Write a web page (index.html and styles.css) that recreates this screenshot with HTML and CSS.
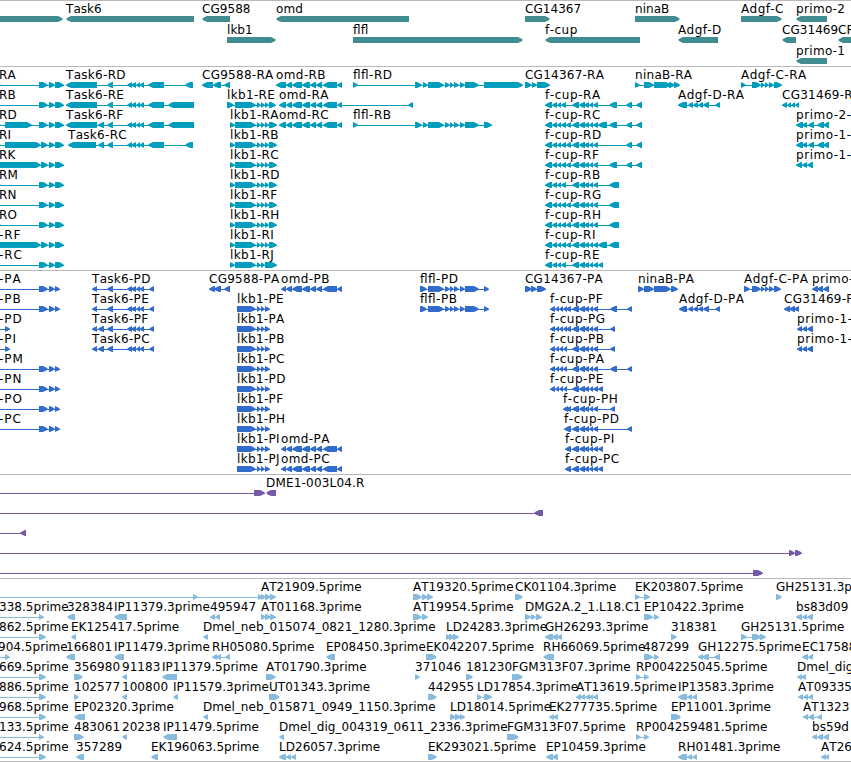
FILE: index.html
```
<!DOCTYPE html>
<html lang="en">
<head>
    <meta charset="UTF-8">
    <meta name="viewport" content="width=device-width, initial-scale=1.0">
    <title>Genome Browser</title>
    <link rel="stylesheet" href="styles.css">
</head>
<body>
    <main class="browser">
        <section class="track genes" id="genes"></section>
        <section class="track transcripts" id="transcripts"></section>
        <section class="track proteins" id="proteins"></section>
        <section class="track clones" id="clones"></section>
        <section class="track ests" id="ests"></section>
    </main>
    <script src="tracks.js"></script>
</body>
</html>
```

FILE: styles.css
```
body {
    margin: 0;
    background: white;
    overflow: hidden;
}
.browser {
    display: flex;
    flex-direction: column;
    width: 851px;
    height: 762px;
    overflow: hidden;
}
.track {
    flex: none;
    box-sizing: border-box;
    border-top: 1px solid #b9b9b9;
}
.track svg {
    display: block;
    width: 100%;
    height: 100%;
}
.track text {
    font-family: "DejaVu Sans", sans-serif;
    font-size: 12px;
    font-kerning: none;
    fill: black;
}
.genes {
    height: 66px;
    color: #408c91;
}
.transcripts {
    height: 204px;
    color: #009dbd;
}
.proteins {
    height: 204px;
    color: #316bcb;
}
.clones {
    height: 104px;
    color: #7558a8;
}
.ests {
    height: 184px;
    color: #87bbde;
    border-bottom: 1px solid #b9b9b9;
}
.exon {
    fill: currentColor;
}
.intron {
    fill: currentColor;
    shape-rendering: crispEdges;
}
```

FILE: tracks.js
```
const SVG = 'http://www.w3.org/2000/svg';

// Exon sets shared by several features: start, end, start, end...
const tail = [49, 55, 55, 64];
const ptail = [-9, -4, 39, 48, 49, 55, 55, 60];
const task = [127, 132, 131, 136, 136, 140, 139.5, 144];
const lkb = [230, 235, 235, 256, 257, 261, 261, 265, 265, 269, 269, 277];
const plkb = [237, 256, 257, 261, 261, 265, 265, 270];
const omd = [286, 292, 292, 302, 302, 310, 310, 316, 316, 322, 323, 337, 337, 342];
const flfl = [428, 444, 445, 450, 450, 454, 454, 459, 460, 465, 465, 479];
const cup = [545, 552, 552, 557, 557, 561, 561, 566];
const pcup = [550, 555, 555, 559, 559, 563, 563, 567];
const mid = [572, 579, 579, 585, 584, 589, 589, 593, 593, 598];
const adgfD = [688, 693, 693, 698, 698, 703, 703, 709, 715, 720];
const adgfC = [752, 761, 761, 765, 765, 769, 769, 774];

// Feature: [row, label, label x, strand, exons]
const genes = [
    [0, '', 0, '>', [-20, 63]],
    [0, 'Task6', 66, '<', [66, 194]],
    [0, 'CG9588', 202, '<', [202, 230]],
    [0, 'omd', 276, '<', [276, 409]],
    [0, 'CG14367', 525, '>', [525, 550]],
    [0, 'ninaB', 635, '>', [635, 680]],
    [0, 'Adgf-C', 741, '>', [741, 782]],
    [0, 'primo-2', 796, '<', [796, 827]],
    [1, 'lkb1', 227, '>', [227, 276]],
    [1, 'flfl', 353, '>', [353, 523]],
    [1, 'f-cup', 545, '<', [545, 640]],
    [1, 'Adgf-D', 678, '<', [678, 718]],
    [1, 'CG31469', 782, '<', [782, 796]],
    [1, 'CR', 838, '<', [838, 870]],
    [2, 'primo-1', 796, '<', [796, 827]]
];

const transcripts = [
    [0, 'RA', -1, '>', [-5, 1, 39, 48, ...tail]],
    [1, 'RB', -1, '>', [-5, -1, 39, 48, ...tail]],
    [2, 'RD', -1, '>', [-5, 1, 5, 32, 39, 48, ...tail]],
    [3, 'RI', -1, '>', [-5, 1, 5, 41, 41, 48, ...tail]],
    [4, 'RK', -1, '>', [-20, 41, 41, 48, ...tail]],
    [5, 'RM', -1, '>', [-5, 1, 39, 48, ...tail]],
    [6, 'RN', -1, '>', [-5, -1, 39, 48, ...tail]],
    [7, 'RO', -1, '>', [-5, 1, 39, 48, ...tail]],
    [8, '-RF', -1, '>', [-20, 41, 41, 48, ...tail]],
    [9, '-RC', -1, '>', [-5, -1, 39, 48, ...tail]],
    [0, 'Task6-RD', 66, '<', [66, 97, 107, 113, ...task, 148, 164, 185, 193]],
    [1, 'Task6-RE', 66, '<', [66, 97, 107, 113, ...task, 148, 164, 168, 194]],
    [2, 'Task6-RF', 66, '<', [66, 97, 98, 104, 107, 113, ...task, 148, 164, 168, 194]],
    [3, 'Task6-RC', 68, '<', [68, 96, 98, 104, 107, 113, ...task, 148, 164, 185, 193]],
    [0, 'CG9588-RA', 202, '<', [202, 213, 213, 221, 224, 230]],
    [1, 'lkb1-RE', 227, '>', [227, 234, 235, 256, 257, 261, 261, 265, 265, 269, 269, 276]],
    [2, 'lkb1-RA', 230, '>', lkb],
    [3, 'lkb1-RB', 230, '>', lkb],
    [4, 'lkb1-RC', 230, '>', lkb],
    [5, 'lkb1-RD', 230, '>', lkb],
    [6, 'lkb1-RF', 230, '>', lkb],
    [7, 'lkb1-RH', 230, '>', lkb],
    [8, 'lkb1-RI', 230, '>', lkb],
    [9, 'lkb1-RJ', 230, '>', [230, 235, 235, 256, 257, 261, 261, 265, 265, 277]],
    [0, 'omd-RB', 276, '<', [276, 286, ...omd]],
    [1, 'omd-RA', 279, '<', [279, 286, ...omd, 408, 413]],
    [2, 'omd-RC', 279, '<', [279, 286, ...omd]],
    [0, 'flfl-RD', 353, '>', [353, 358, 415, 422, 423, 428, ...flfl, 484, 523]],
    [2, 'flfl-RB', 353, '>', [353, 358, 415, 422, 423, 428, ...flfl, 484, 492]],
    [0, 'CG14367-RA', 525, '>', [525, 532, 532, 537, 537, 550]],
    [1, 'f-cup-RA', 545, '<', [...cup, ...mid, 609, 617, 626, 632, 636, 642]],
    [2, 'f-cup-RC', 545, '<', [...cup, 566, 571, ...mid, 598, 607, 609, 617, 626, 632, 636, 642]],
    [3, 'f-cup-RD', 545, '<', [...cup, 566, 571, ...mid, 626, 632, 636, 642]],
    [4, 'f-cup-RF', 545, '<', [...cup, 566, 571, ...mid, 609, 617, 626, 632, 636, 642]],
    [5, 'f-cup-RB', 545, '<', [...cup, ...mid, 609, 619]],
    [6, 'f-cup-RG', 545, '<', [...cup, 566, 571, ...mid, 609, 619]],
    [7, 'f-cup-RH', 545, '<', [...cup, 566, 571, ...mid, 609, 619]],
    [8, 'f-cup-RI', 545, '<', [...cup, 566, 571, ...mid, 598, 607, 609, 619]],
    [9, 'f-cup-RE', 545, '<', [...cup, ...mid, 598, 603]],
    [0, 'ninaB-RA', 635, '>', [635, 640, 644, 654, 654, 671, 669, 675, 674, 680]],
    [1, 'Adgf-D-RA', 678, '<', [678, 687, ...adgfD]],
    [0, 'Adgf-C-RA', 741, '>', [741, 746, ...adgfC, 774, 782]],
    [1, 'CG31469-R', 782, '<', [782, 787, 787, 791, 791, 795, 795, 799]],
    [2, 'primo-2-', 796, '<', [796, 803, 802, 807, 808, 814, 817, 824, 823, 829]],
    [3, 'primo-1-', 796, '<', [796, 803, 802, 807, 808, 814, 817, 824, 823, 829]],
    [4, 'primo-1-', 796, '<', [796, 802, 802, 807, 807, 813]]
];

const proteins = [
    [0, '-PA', -1, '>', ptail],
    [1, '-PB', -1, '>', ptail],
    [2, '-PD', -1, '>', [-9, -4, 5, 10]],
    [3, '-PI', -1, '>', [-9, -4, 5, 10]],
    [4, '-PM', -1, '>', ptail],
    [5, '-PN', -1, '>', ptail],
    [6, '-PO', -1, '>', ptail],
    [7, '-PC', -1, '>', ptail],
    [0, 'Task6-PD', 92, '<', [92, 97, 107, 113, ...task, 149, 154]],
    [1, 'Task6-PE', 92, '<', [92, 97, 107, 113, ...task, 149, 154]],
    [2, 'Task6-PF', 92, '<', [92, 97, 98, 104, 107, 113, ...task, 149, 154]],
    [3, 'Task6-PC', 92, '<', [92, 97, 98, 104, 107, 113, ...task, 149, 154]],
    [0, 'CG9588-PA', 209, '<', [209, 215, 214, 221, 224, 230]],
    [1, 'lkb1-PE', 237, '>', plkb],
    [2, 'lkb1-PA', 237, '>', plkb],
    [3, 'lkb1-PB', 237, '>', plkb],
    [4, 'lkb1-PC', 237, '>', plkb],
    [5, 'lkb1-PD', 237, '>', plkb],
    [6, 'lkb1-PF', 237, '>', plkb],
    [7, 'lkb1-PH', 237, '>', plkb],
    [8, 'lkb1-PI', 237, '>', plkb],
    [9, 'lkb1-PJ', 237, '>', plkb],
    [0, 'omd-PB', 281, '<', [281, 286, ...omd]],
    [8, 'omd-PA', 281, '<', [281, 286, ...omd]],
    [9, 'omd-PC', 281, '<', [281, 286, ...omd]],
    [0, 'flfl-PD', 420, '>', [420, 427, ...flfl, 484, 489]],
    [1, 'flfl-PB', 420, '>', [420, 427, ...flfl, 484, 489]],
    [0, 'CG14367-PA', 525, '>', [525, 532, 531, 537, 537, 546]],
    [1, 'f-cup-PF', 550, '<', [...pcup, 566, 571, ...mid, 610, 617, 627, 632]],
    [2, 'f-cup-PG', 550, '<', [...pcup, 566, 571, ...mid, 610, 615]],
    [3, 'f-cup-PB', 550, '<', [...pcup, ...mid, 610, 615]],
    [4, 'f-cup-PA', 550, '<', [...pcup, ...mid, 610, 617, 627, 632]],
    [5, 'f-cup-PE', 550, '<', [...pcup, ...mid, 598, 603]],
    [6, 'f-cup-PH', 563, '<', [563, 568, 566, 571, ...mid, 610, 615]],
    [7, 'f-cup-PD', 564, '<', [564, 571, ...mid, 627, 632]],
    [8, 'f-cup-PI', 565, '<', [565, 571, ...mid, 598, 603]],
    [9, 'f-cup-PC', 565, '<', [565, 571, ...mid, 598, 603]],
    [0, 'ninaB-PA', 638, '>', [638, 644, 644, 654, 654, 671, 671, 678]],
    [1, 'Adgf-D-PA', 679, '<', [679, 687, ...adgfD]],
    [0, 'Adgf-C-PA', 744, '>', [744, 750, ...adgfC, 774, 781]],
    [0, 'primo-', 812, '<', [812, 818, 817, 823, 823, 829]],
    [1, 'CG31469-P', 784, '<', [784, 790, 789, 795, 794, 799]],
    [2, 'primo-1-', 797, '<', [797, 802, 802, 807, 807, 813]],
    [3, 'primo-1-', 797, '<', [797, 802, 802, 807, 807, 813]]
];

const clones = [
    [0, '', 0, '>', [-9, -4, 254, 265]],
    [0, 'DME1-003L04.R', 266, '<', [266, 276]],
    [1, '', 0, '<', [-9, -4, 534, 543]],
    [2, '', 0, '<', [-9, -4, 20, 26]],
    [3, '', 0, '>', [-9, -4, 789, 795, 795, 802]],
    [4, '', 0, '>', [-9, -4, 753, 763]]
];

const ests = [
    [0, '', 0, '>', [-9, -4, 193, 198, 258, 263]],
    [0, 'AT21909.5prime', 261, '>', [261, 266, 265, 271, 270, 276]],
    [0, 'AT19320.5prime', 413, '>', [413, 422, 422, 428, 427, 433]],
    [0, 'CK01104.3prime', 515, '>', [515, 523]],
    [0, 'EK203807.5prime', 635, '>', [635, 640, 644, 650]],
    [0, 'GH25131.3p', 776, '>', [776, 782]],
    [1, '338.5prime', -1, '>', [-9, -4, 39, 44]],
    [1, '328384', 67, '<', [67, 75]],
    [1, 'IP11379.3prime', 114, '<', [114, 127]],
    [1, '495947', 210, '<', [210, 215, 215, 220]],
    [1, 'AT01168.3prime', 261, '>', [261, 266, 265, 271, 270, 276]],
    [1, 'AT19954.5prime', 413, '>', [413, 422, 422, 428]],
    [1, 'DMG2A.2_1.L18.C1', 525, '>', [525, 531, 531, 536, 536, 542]],
    [1, 'EP10422.3prime', 644, '>', [644, 653, 654, 659]],
    [1, 'bs83d09', 796, '<', [796, 802, 802, 807, 807, 813]],
    [2, '862.5prime', -1, '>', [-9, -4, 39, 46]],
    [2, 'EK125417.5prime', 71, '<', [71, 76]],
    [2, 'Dmel_neb_015074_0821_1280.3prime', 203, '<', [203, 208]],
    [2, 'LD24283.3prime', 446, '>', [446, 451, 449, 455, 453, 459]],
    [2, 'GH26293.3prime', 545, '<', [545, 553, 552, 558, 557, 562]],
    [2, '318381', 671, '>', [671, 677]],
    [2, 'GH25131.5prime', 741, '>', [741, 747, 752, 761, 760, 766]],
    [3, '904.5prime', -2, '>', [-9, -4, 5, 10]],
    [3, '166801', 66, '<', [66, 75]],
    [3, 'IP11479.3prime', 114, '<', [114, 124]],
    [3, 'RH05080.5prime', 212, '<', [212, 217, 216, 221, 225, 230]],
    [3, 'EP08450.3prime', 326, '<', [326, 335]],
    [3, 'EK042207.5prime', 426, '>', [426, 437]],
    [3, 'RH66069.5prime', 543, '<', [543, 554]],
    [3, '487299', 643, '>', [644, 653, 654, 659]],
    [3, 'GH12275.5prime', 698, '<', [698, 703, 702, 709, 714, 720]],
    [3, 'EC17588', 802, '<', [802, 808, 808, 813]],
    [4, '669.5prime', -1, '>', [-9, -4, 39, 46]],
    [4, '356980', 74, '>', [74, 83]],
    [4, '91183', 122, '<', [122, 127]],
    [4, 'IP11379.5prime', 162, '<', [162, 177]],
    [4, 'AT01790.3prime', 266, '>', [266, 276]],
    [4, '371046', 415, '>', [415, 420]],
    [4, '181230', 466, '>', [466, 473]],
    [4, 'FGM313F07.3prime', 512, '>', [512, 523]],
    [4, 'RP004225045.5prime', 636, '>', [636, 641, 644, 649]],
    [4, 'Dmel_dig', 797, '<', [797, 802, 801, 806]],
    [5, '886.5prime', -1, '>', [-9, -4, 39, 46]],
    [5, '102577', 74, '>', [74, 79]],
    [5, '100800', 122, '<', [122, 127]],
    [5, 'IP11579.3prime', 173, '<', [173, 178]],
    [5, 'UT01343.3prime', 269, '>', [269, 280]],
    [5, '442955', 428, '>', [428, 437]],
    [5, 'LD17854.3prime', 477, '>', [477, 482, 484, 492]],
    [5, 'AT13619.5prime', 576, '<', [576, 581, 580, 585, 585, 590, 589, 593, 593, 598]],
    [5, 'IP13583.3prime', 678, '<', [678, 687, 687, 692, 692, 697]],
    [5, 'AT09335', 798, '<', [798, 803, 803, 808, 808, 813]],
    [6, '968.5prime', -1, '>', [-9, -4, 39, 46]],
    [6, 'EP02320.3prime', 74, '<', [74, 85]],
    [6, 'Dmel_neb_015871_0949_1150.3prime', 203, '<', [203, 208]],
    [6, 'LD18014.5prime', 450, '>', [450, 456, 455, 461, 460, 465]],
    [6, 'EK277735.5prime', 549, '<', [549, 554, 553, 558]],
    [6, 'EP11001.3prime', 671, '>', [671, 681]],
    [6, 'AT1323', 803, '<', [803, 808, 808, 814, 817, 822]],
    [7, '133.5prime', -1, '>', [-9, -4, 39, 44]],
    [7, '483061', 74, '>', [74, 84]],
    [7, '20238', 122, '<', [122, 127]],
    [7, 'IP11479.5prime', 163, '<', [163, 177]],
    [7, 'Dmel_dig_004319_0611_2336.3prime', 279, '<', [279, 284]],
    [7, 'FGM313F07.5prime', 507, '>', [507, 519]],
    [7, 'RP004259481.5prime', 636, '>', [636, 641, 644, 649]],
    [7, 'bs59d', 812, '<', [812, 817, 817, 823, 823, 829]],
    [8, '624.5prime', -1, '>', [-9, -4, 39, 46]],
    [8, '357289', 76, '<', [76, 84]],
    [8, 'EK196063.5prime', 151, '<', [151, 158]],
    [8, 'LD26057.3prime', 279, '<', [279, 286, 286, 291, 291, 296]],
    [8, 'EK293021.5prime', 428, '>', [428, 437]],
    [8, 'EP10459.3prime', 546, '<', [546, 553, 552, 558]],
    [8, 'RH01481.3prime', 678, '<', [678, 687, 687, 692, 692, 697]],
    [8, 'AT26', 821, '<', [821, 826, 825, 829]]
];

function add(parent, name, attrs) {
    const el = document.createElementNS(SVG, name);
    for (const key in attrs) {
        el.setAttribute(key, attrs[key]);
    }
    parent.appendChild(el);
    return el;
}

// Box with a pointed end in the direction of the strand
function drawExon(svg, x1, x2, y, strand) {
    const tip = Math.min(5, x2 - x1);
    const points = strand === '>'
        ? [x1, y, x2 - tip, y, x2 - 1.5, y + 1.8, x2, y + 3, x2 - 1.5, y + 4.2, x2 - tip, y + 6, x1, y + 6]
        : [x2, y, x1 + tip, y, x1 + 1.5, y + 1.8, x1, y + 3, x1 + 1.5, y + 4.2, x1 + tip, y + 6, x2, y + 6];
    add(svg, 'polygon', { class: 'exon', points: points.join(' ') });
}

function drawTrack(id, features, rowHeight) {
    const svg = add(document.getElementById(id), 'svg', {});
    for (const [row, label, labelX, strand, exons] of features) {
        const top = row * rowHeight;
        const y = top + 15;
        const start = exons[0];
        const end = exons[exons.length - 1];

        if (exons.length > 2) {
            add(svg, 'rect', { class: 'intron', x: start, y: y + 3, width: end - start, height: 1 });
        }
        for (let i = 0; i < exons.length; i += 2) {
            drawExon(svg, exons[i], exons[i + 1], y, strand);
        }
        if (label) {
            const text = add(svg, 'text', { x: labelX, y: top + 12 });
            text.textContent = label;
            const hyphens = label.split('-').length - 1;
            text.setAttribute('textLength', text.getComputedTextLength() * 1.005 + hyphens * 1.8);
        }
    }
}

drawTrack('genes', genes, 21);
drawTrack('transcripts', transcripts, 20);
drawTrack('proteins', proteins, 20);
drawTrack('clones', clones, 20);
drawTrack('ests', ests, 20);
```
